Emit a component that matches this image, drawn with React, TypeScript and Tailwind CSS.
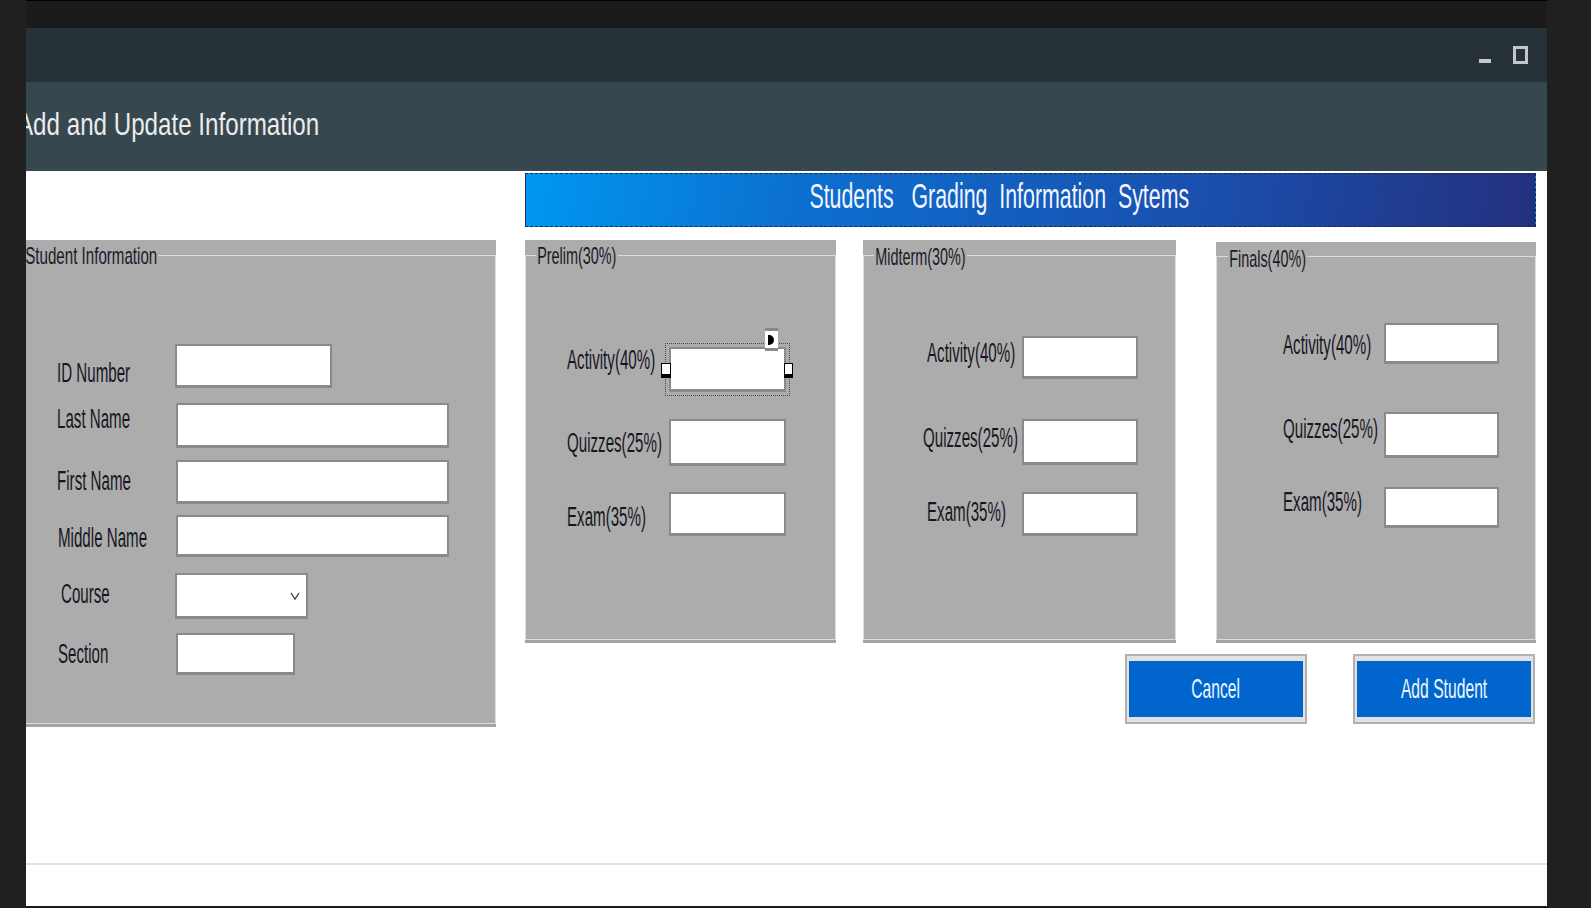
import React from 'react';

type RowDef = {
  label: string;
  rowClass: string;
  labelClass: string;
  inputClass: string;
  kind?: 'text' | 'combo' | 'selected';
};

function Label({ children }: { children: React.ReactNode }) {
  return (
    <span className="inline-block origin-left scale-x-[0.56] whitespace-pre text-[27px] leading-[28px] text-[#16161f]">
      {children}
    </span>
  );
}

function Field({ kind, inputClass }: { kind?: RowDef['kind']; inputClass: string }) {
  return (
    <div className={`relative shrink-0 ${inputClass}`}>
      <input
        readOnly
        className="block h-full w-full border-2 border-b-[3px] border-[#8a8a8a] bg-white outline-none"
      />
      {kind === 'combo' && (
        <svg className="absolute left-[114px] top-[17px]" width="12" height="12" viewBox="0 0 12 12">
          <polyline points="2,3 6,9 10,3" fill="none" stroke="#3a3a3a" strokeWidth="1.3" />
        </svg>
      )}
      {kind === 'selected' && (
        <>
          <div className="absolute -inset-[4px] border border-dotted border-[#4a4a4a]" />
          <div className="absolute -left-[8px] top-[16px] h-[15px] w-[10px] border border-b-[4px] border-black bg-white" />
          <div className="absolute left-[115px] top-[16px] h-[15px] w-[9px] border border-b-[4px] border-black bg-white" />
          <div className="absolute left-[96px] -top-[19px] flex h-[23px] w-[13px] items-center border-y-[3px] border-[#8a8a82] bg-white pl-[3px]">
            <div className="h-[10px] w-[6px] rounded-r-full bg-black" />
          </div>
        </>
      )}
    </div>
  );
}

function Rows({ rows }: { rows: RowDef[] }) {
  return (
    <>
      {rows.map((r) => (
        <div key={r.label} className={`flex items-start ${r.rowClass}`}>
          <div className={`shrink-0 ${r.labelClass}`}>
            <Label>{r.label}</Label>
          </div>
          <Field kind={r.kind} inputClass={r.inputClass} />
        </div>
      ))}
    </>
  );
}

function Group({
  title,
  className,
  titleClass,
  lineClass,
  bodyClass,
  children,
}: {
  title: string;
  className: string;
  titleClass: string;
  lineClass: string;
  bodyClass: string;
  children: React.ReactNode;
}) {
  return (
    <div className={`relative shrink-0 bg-[#acacac] ${className}`}>
      <div className={`absolute left-0 right-0 bottom-[3px] border border-[#dcdcdc] ${lineClass}`} />
      <div className="absolute bottom-0 left-0 right-0 h-[3px] bg-[#a3a3a3]" />
      <span
        className={`absolute inline-block origin-left whitespace-pre bg-[#acacac] px-[2px] text-[24px] leading-[24px] text-[#1a1a28] ${titleClass}`}
      >
        {title}
      </span>
      <div className={`relative flex flex-col ${bodyClass}`}>{children}</div>
    </div>
  );
}

const studentRows: RowDef[] = [
  { label: 'ID Number', rowClass: 'mt-[104px]', labelClass: 'w-[118px] mt-[15px]', inputClass: 'w-[157px] h-[44px]' },
  { label: 'Last Name', rowClass: 'mt-[14px]', labelClass: 'w-[119px] mt-[2px]', inputClass: 'w-[273px] h-[45px]' },
  { label: 'First Name', rowClass: 'mt-[12px]', labelClass: 'w-[119px] mt-[7px]', inputClass: 'w-[273px] h-[44px]' },
  { label: 'Middle Name', rowClass: 'mt-[11px]', labelClass: 'ml-[1px] w-[118px] mt-[9px]', inputClass: 'w-[273px] h-[42px]' },
  { label: 'Course', rowClass: 'mt-[16px]', labelClass: 'ml-[4px] w-[114px] mt-[7px]', inputClass: 'w-[133px] h-[46px]', kind: 'combo' },
  { label: 'Section', rowClass: 'mt-[14px]', labelClass: 'ml-[1px] w-[118px] mt-[7px]', inputClass: 'w-[119px] h-[42px]' },
];

const prelimRows: RowDef[] = [
  { label: 'Activity(40%)', rowClass: 'mt-[107px]', labelClass: 'w-[102px] -mt-[1px]', inputClass: 'w-[117px] h-[45px]', kind: 'selected' },
  { label: 'Quizzes(25%)', rowClass: 'mt-[27px]', labelClass: 'w-[102px] mt-[10px]', inputClass: 'w-[117px] h-[47px]' },
  { label: 'Exam(35%)', rowClass: 'mt-[26px]', labelClass: 'w-[102px] mt-[11px]', inputClass: 'w-[117px] h-[44px]' },
];

const midtermRows: RowDef[] = [
  { label: 'Activity(40%)', rowClass: 'mt-[96px]', labelClass: 'ml-[4px] w-[95px] mt-[3px]', inputClass: 'w-[116px] h-[43px]' },
  { label: 'Quizzes(25%)', rowClass: 'mt-[40px]', labelClass: 'w-[99px] mt-[5px]', inputClass: 'w-[116px] h-[46px]' },
  { label: 'Exam(35%)', rowClass: 'mt-[27px]', labelClass: 'ml-[4px] w-[95px] mt-[6px]', inputClass: 'w-[116px] h-[44px]' },
];

const finalsRows: RowDef[] = [
  { label: 'Activity(40%)', rowClass: 'mt-[81px]', labelClass: 'w-[101px] mt-[8px]', inputClass: 'w-[115px] h-[41px]' },
  { label: 'Quizzes(25%)', rowClass: 'mt-[48px]', labelClass: 'w-[101px] mt-[3px]', inputClass: 'w-[115px] h-[46px]' },
  { label: 'Exam(35%)', rowClass: 'mt-[29px]', labelClass: 'w-[101px] mt-[1px]', inputClass: 'w-[115px] h-[41px]' },
];

function BlueButton({ text }: { text: string }) {
  return (
    <div className="h-[70px] w-[182px] border-2 border-[#b1b1b1] bg-[#e1e1e1] px-[2px] py-[5px]">
      <div className="flex h-full w-full items-center justify-center bg-[#0066cd]">
        <span className="inline-block origin-center scale-x-[0.56] whitespace-pre text-[28px] leading-[28px] text-[#eef6ff]">
          {text}
        </span>
      </div>
    </div>
  );
}

export default function App() {
  return (
    <div className="flex h-[908px] w-[1591px] overflow-hidden bg-[#202020] font-['Liberation_Sans',Arial,sans-serif]">
      <div className="w-[26px] shrink-0" />

      <div className="flex w-[1521px] shrink-0 flex-col overflow-hidden">
        {/* top strip */}
        <div className="h-[28px] shrink-0 border-t border-black bg-[#1b1b1b]" />

        {/* title bar */}
        <div className="flex h-[54px] shrink-0 items-start justify-end bg-[#263238] pr-[19px]">
          <div className="mt-[31px] h-[4px] w-[12px] bg-[#c9c9c9]" />
          <div className="ml-[22px] mt-[18px] h-[18px] w-[15px] border-[3px] border-[#c5c5c5]" />
        </div>

        {/* header */}
        <div className="h-[89px] shrink-0 bg-[#37474f] pt-[26px]">
          <span className="-ml-[9px] inline-block origin-left scale-x-[0.755] whitespace-pre text-[32px] leading-[32px] text-[#ececec]">
            Add and Update Information
          </span>
        </div>

        {/* content */}
        <div className="flex h-[735px] shrink-0 flex-col bg-white">
          <div className="flex h-[692px] shrink-0 items-start">
            <Group
              title="Student Information"
              className="-ml-[10px] mt-[69px] h-[487px] w-[480px]"
              titleClass="left-[8px] top-[4px] scale-x-[0.63]"
              lineClass="top-[15px]"
              bodyClass="pl-[41px]"
            >
              <Rows rows={studentRows} />
            </Group>

            <div className="ml-[29px] flex w-[1011px] shrink-0 flex-col">
              <div className="mt-[2px] flex h-[54px] items-center justify-center border border-dashed border-[#1c2a48] bg-[linear-gradient(100deg,#0098f0_0%,#0c6fd0_27%,#1a4fae_67%,#24307e_100%)] pb-[9px] pr-[62px]">
                <span className="inline-block origin-center scale-x-[0.61] whitespace-pre text-[35px] leading-[35px] text-[#f2f5ff]">
                  {'Students   Grading  Information  Sytems'}
                </span>
              </div>

              <div className="mt-[13px] flex items-start">
                <Group
                  title="Prelim(30%)"
                  className="h-[403px] w-[311px]"
                  titleClass="left-[11px] top-[4px] scale-x-[0.6]"
                  lineClass="top-[15px]"
                  bodyClass="pl-[42px]"
                >
                  <Rows rows={prelimRows} />
                </Group>
                <Group
                  title="Midterm(30%)"
                  className="ml-[27px] h-[403px] w-[313px]"
                  titleClass="left-[11px] top-[5px] scale-x-[0.6]"
                  lineClass="top-[15px]"
                  bodyClass="pl-[60px]"
                >
                  <Rows rows={midtermRows} />
                </Group>
                <Group
                  title="Finals(40%)"
                  className="ml-[40px] mt-[2px] h-[401px] w-[320px]"
                  titleClass="left-[12px] top-[5px] scale-x-[0.6]"
                  lineClass="top-[14px]"
                  bodyClass="pl-[67px]"
                >
                  <Rows rows={finalsRows} />
                </Group>
              </div>

              <div className="mt-[11px] flex justify-end gap-[46px] pr-[1px]">
                <BlueButton text="Cancel" />
                <BlueButton text="Add Student" />
              </div>
            </div>
          </div>
          <div className="h-[2px] shrink-0 bg-[#e0e0e0]" />
          <div className="flex-1" />
        </div>

        <div className="h-[2px] shrink-0 bg-[#1b1b1b]" />
      </div>

      <div className="flex-1" />
    </div>
  );
}
